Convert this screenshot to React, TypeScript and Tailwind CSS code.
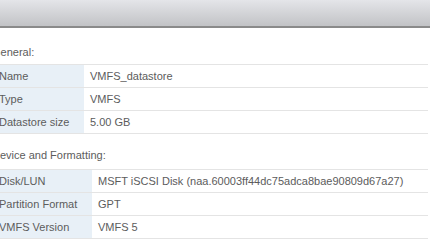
const general = [
  ["Name", "VMFS_datastore"],
  ["Type", "VMFS"],
  ["Datastore size", "5.00 GB"],
];

const device = [
  ["Disk/LUN", "MSFT iSCSI Disk (naa.60003ff44dc75adca8bae90809d67a27)"],
  ["Partition Format", "GPT"],
  ["VMFS Version", "VMFS 5"],
];

function PropTable({ rows, labelWidth }: { rows: string[][]; labelWidth: string }) {
  return (
    <div className="w-[436px] border-t border-[#e4e4e4]">
      {rows.map(([label, value]) => (
        <div key={label} className="flex h-[23px] border-b border-[#e4e4e4]">
          <div className={`${labelWidth} shrink-0 bg-[#e8f0f7] pl-[7px] flex items-center`}>
            {label}
          </div>
          <div className="flex-1 pl-[6px] flex items-center whitespace-nowrap">{value}</div>
        </div>
      ))}
    </div>
  );
}

export default function App() {
  return (
    <div className="w-[430px] h-[244px] bg-white overflow-hidden font-['Liberation_Sans',Arial,sans-serif] text-[11px] text-[#5c5c5c]">
      <div className="h-[28px] bg-gradient-to-b from-[#e4e5e9] to-[#c2c3c6] border-b-2 border-[#8a8a8a]" />
      <div className="ml-[-8px]">
        <div className="h-[36px] flex items-end pb-[4px]">General:</div>
        <PropTable rows={general} labelWidth="w-[92px]" />
        <div className="h-[35px] flex items-end pb-[6px]">Device and Formatting:</div>
        <PropTable rows={device} labelWidth="w-[100px]" />
      </div>
    </div>
  );
}
